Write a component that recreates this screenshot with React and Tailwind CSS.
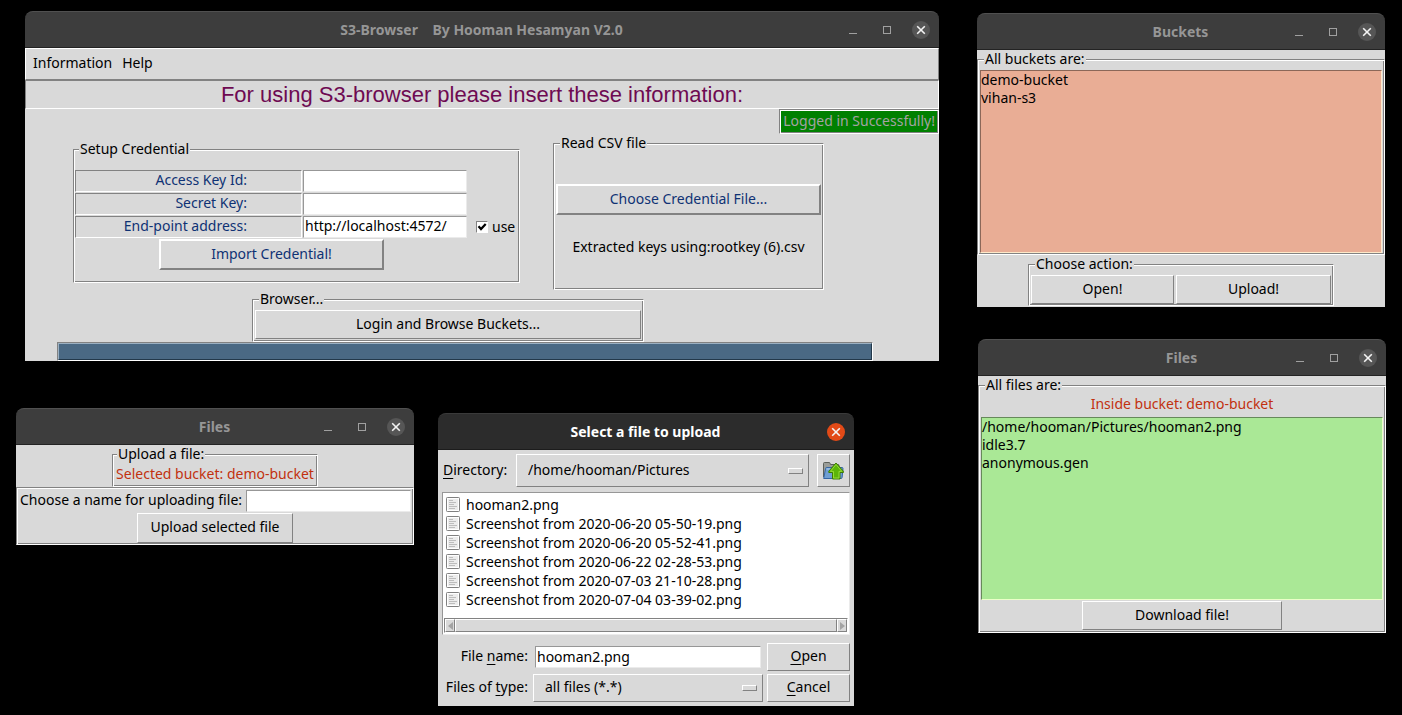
import React from "react";

const RAISED = "border border-t-white border-l-white border-b-[#828282] border-r-[#828282]";
const RAISED_2 = "border-2 border-t-white border-l-white border-b-[#828282] border-r-[#828282]";
const SUNKEN = "border border-t-[#828282] border-l-[#828282] border-b-white border-r-white";
const FIELD = "border border-t-[#979797] border-l-[#979797] border-b-[#ebebeb] border-r-[#ebebeb] bg-white";
const GROOVE = SUNKEN + " shadow-[inset_1px_1px_0_#ffffff,inset_-1px_-1px_0_#828282]";

function cx(...parts) {
  return parts.filter(Boolean).join(" ");
}

function CloseIcon() {
  return (
    <svg viewBox="0 0 10 10" className="size-[10px]" fill="none" stroke="#f4f4f4" strokeWidth="1.6">
      <path d="M1.2 1.2 L8.8 8.8 M8.8 1.2 L1.2 8.8" />
    </svg>
  );
}

function TitleBar({ title, active }) {
  return (
    <header
      className={cx(
        "grid h-[37px] grid-cols-[1fr_auto_1fr] items-center rounded-t-lg border-t border-b pr-px",
        active ? "border-t-[#3a3a3a] border-b-[#1c1c1c] bg-[#2c2c2c]" : "border-t-[#505050] border-b-[#232323] bg-[#3d3d3d]"
      )}
    >
      <h2 className={cx("col-start-2 whitespace-pre text-sm leading-5 font-bold", active ? "text-white" : "text-[#969696]")}>
        {title}
      </h2>
      <div className="flex justify-end">
        {!active && (
          <>
            <button aria-label="Minimize" className="flex h-6 w-[34px] items-end justify-center pb-2">
              <span className="h-px w-2 bg-[#a0a0a0]" />
            </button>
            <button aria-label="Maximize" className="flex h-6 w-[34px] items-center justify-center">
              <span className="size-2 border border-[#a0a0a0]" />
            </button>
          </>
        )}
        <button aria-label="Close" className="flex h-6 w-[34px] items-center justify-center">
          <span className={cx("flex size-[18px] items-center justify-center rounded-full", active ? "bg-[#e24a17]" : "bg-[#565656]")}>
            <CloseIcon />
          </span>
        </button>
      </div>
    </header>
  );
}

function Window({ title, active, place, children }) {
  return (
    <section className={cx("absolute", place)} aria-label={title}>
      <TitleBar title={title} active={active} />
      <div className="bg-[#d9d9d9]">{children}</div>
    </section>
  );
}

function Frame({ legend, className, children }) {
  return (
    <fieldset className={cx(GROOVE, "min-w-0", className)}>
      <legend className="ml-1 bg-[#d9d9d9] px-px leading-[18px]">{legend}</legend>
      {children}
    </fieldset>
  );
}

function Button({ heavy, className, children, ...rest }) {
  return (
    <button className={cx(heavy ? RAISED_2 : RAISED, "pb-[2px]", className)} {...rest}>
      {children}
    </button>
  );
}

function Credential({ id, label, value, extra }) {
  return (
    <div className="flex h-[22px] items-stretch gap-px">
      <label htmlFor={id} className={cx(SUNKEN, "w-[227px] pr-[54px] text-right leading-[18px] text-[#0f3274]")}>
        {label}
      </label>
      <input id={id} defaultValue={value} className={cx(FIELD, "w-[164px] px-px pb-[2px] outline-none")} />
      {extra}
    </div>
  );
}

function MainWindow() {
  return (
    <Window title="S3-Browser    By Hooman Hesamyan V2.0" place="left-[25px] top-[11px] w-[914px]">
      <nav className={cx(RAISED, "flex h-8 items-center gap-[10px] px-[7px] pb-[2px]")}>
        <button>Information</button>
        <button>Help</button>
      </nav>
      <h1 className={cx(SUNKEN, "h-[29px] text-center font-['Liberation_Sans',Arial,sans-serif] text-[22px] leading-7 text-[#6e0a52]")}>
        For using S3-browser please insert these information:
      </h1>
      <div className="flex justify-end">
        <output className={cx(GROOVE, "bg-[#008000] px-[3px] pb-px leading-[22px] text-[#a3a3a3]")}>Logged in Successfully!</output>
      </div>
      <div className="pr-[66px] pl-8">
        <div className="flex items-start gap-[33px] pl-4">
          <Frame legend="Setup Credential" className="mt-[6px] h-[143px] w-[447px] px-px">
            <div className="mt-3 flex flex-col gap-px">
              <Credential id="access" label="Access Key Id:" />
              <Credential id="secret" label="Secret Key:" />
              <Credential
                id="endpoint"
                label="End-point address:"
                value="http://localhost:4572/"
                extra={
                  <label className="ml-2 flex items-center gap-1 leading-[18px]">
                    <span className="relative flex">
                      <input
                        type="checkbox"
                        defaultChecked
                        className="peer size-3 appearance-none border border-t-[#828282] border-l-[#828282] border-b-white border-r-white bg-white"
                      />
                      <svg
                        viewBox="0 0 12 12"
                        className="pointer-events-none absolute inset-0 hidden size-3 peer-checked:block"
                        fill="none"
                        stroke="#000"
                        strokeWidth="2.2"
                      >
                        <path d="M2.5 5.2 L5 8 L9.7 3" />
                      </svg>
                    </span>
                    use
                  </label>
                }
              />
            </div>
            <Button heavy className="mt-px ml-[84px] block h-[31px] w-[225px] text-[#0f3274]">
              Import Credential!
            </Button>
          </Frame>
          <Frame legend="Read CSV file" className="h-[156px] w-[271px] px-[2px]">
            <Button heavy className="mt-8 block h-[31px] w-full text-[#0f3274]">
              Choose Credential File...
            </Button>
            <p className="mt-[23px] text-center leading-[18px]">Extracted keys using:rootkey (6).csv</p>
          </Frame>
        </div>
        <div className="flex justify-center pr-[34px]">
          <Frame legend="Browser..." className="w-[392px] px-[2px] pb-[2px]">
            <Button className="mt-[2px] block h-[29px] w-full">Login and Browse Buckets...</Button>
          </Frame>
        </div>
        <div role="progressbar" aria-valuenow={100} className={cx(SUNKEN, "h-[19px]")}>
          <div className="h-full border border-t-[#9bb0c2] border-l-[#9bb0c2] border-r-[#22384a] border-b-[#22384a] bg-[#4a6984]" />
        </div>
      </div>
    </Window>
  );
}

function ListBox({ label, items, tone }) {
  return (
    <ul role="listbox" aria-label={label} className={cx("h-[183px] border leading-[18px]", tone)}>
      {items.map((item) => (
        <li key={item} role="option" aria-selected="false">
          {item}
        </li>
      ))}
    </ul>
  );
}

function BucketsWindow() {
  return (
    <Window title="Buckets" place="left-[977px] top-[13px] w-[408px]">
      <Frame legend="All buckets are:" className="px-[2px] pt-[2px] pb-px">
        <ListBox
          label="Buckets"
          items={["demo-bucket", "vihan-s3"]}
          tone="border-t-[#8b6758] border-l-[#8b6758] border-b-[#ffe9c9] border-r-[#ffe9c9] bg-[#e9ad95]"
        />
      </Frame>
      <div className="flex justify-center pb-px">
        <Frame legend="Choose action:" className="w-[306px] px-[2px] pb-px">
          <div className="mt-[2px] flex gap-[2px]">
            <Button className="h-[29px] w-[143px]">Open!</Button>
            <Button className="h-[29px] grow">Upload!</Button>
          </div>
        </Frame>
      </div>
    </Window>
  );
}

function FilesWindow() {
  return (
    <Window title="Files" place="left-[978px] top-[339px] w-[408px]">
      <Frame legend="All files are:" className="px-[2px] pb-[2px]">
        <p className="mb-[3px] text-center leading-5 text-[#c2310f]">Inside bucket: demo-bucket</p>
        <ListBox
          label="Files"
          items={["/home/hooman/Pictures/hooman2.png", "idle3.7", "anonymous.gen"]}
          tone="border-t-[#66895a] border-l-[#66895a] border-b-[#ebffc8] border-r-[#ebffc8] bg-[#aae896]"
        />
        <Button className="mx-auto mt-px block h-[29px] w-[200px]">Download file!</Button>
      </Frame>
    </Window>
  );
}

function UploadWindow() {
  return (
    <Window title="Files" place="left-[16px] top-[408px] w-[398px]">
      <div className="flex justify-center">
        <Frame legend="Upload a file:" className="w-[206px] pb-[2px]">
          <p className="text-center leading-[21px] text-[#c2310f]">Selected bucket: demo-bucket</p>
        </Frame>
      </div>
      <div className={cx(GROOVE, "h-[58px] px-[2px] pt-[2px]")}>
        <div className="flex h-[22px] items-stretch justify-between">
          <label htmlFor="upload-name" className="px-px leading-5">
            Choose a name for uploading file:
          </label>
          <input id="upload-name" className={cx(FIELD, "w-[165px] px-px outline-none")} />
        </div>
        <Button className="mx-auto mt-px block h-[30px] w-[156px]">Upload selected file</Button>
      </div>
    </Window>
  );
}

function FileIcon() {
  return (
    <svg viewBox="0 0 14 15" className="h-[15px] w-[14px] shrink-0" fill="none">
      <rect x="0.5" y="0.5" width="13" height="14" rx="0.8" fill="#fff" stroke="#808080" />
      <rect x="2" y="2" width="10" height="11" fill="#ececec" />
      <path d="M3 3.5h4M3 5.5h7M3 7.5h5M3 9.5h8M3 11.5h6" stroke="#bdbdbd" />
    </svg>
  );
}

function ParentFolderIcon() {
  return (
    <svg viewBox="0 0 21 19" className="h-[19px] w-[21px]" fill="none">
      <path d="M0.5 16V2.500q0-1 1-1h4.500q1 0 1.200 1l.2 1h7.600q1 0 1 1v5" fill="#9a9d98" stroke="#5c605a" />
      <path d="M3.500 5.500h13v8h-13z" fill="#d5d7d3" stroke="#888a85" strokeWidth="0.6" />
      <path d="M0.700 17.500 2.600 7.500q.1-1 1-1h15.400q1 0 1 1l-.9 9q-.1 1-1 1z" fill="#6f9fd3" stroke="#3465a4" />
      <path d="M3.500 8h15" stroke="#b8d2ee" />
      <path d="M13 2 20.400 10.200v1.300h-3.400v6.500h-7.500v-6.500H5.800v-1.300z" fill="#5cb508" stroke="#3d7a04" strokeLinejoin="round" />
      <path d="M13 3.500 18.800 10.400h-2.800v6.600h-5.500v-6.600H7.400z" stroke="#9be03c" strokeWidth="0.9" />
    </svg>
  );
}

function DropDown({ id, value, size }) {
  return (
    <div className={cx("relative", size)}>
      <select id={id} className={cx(RAISED, "h-full w-full appearance-none bg-[#d9d9d9] px-[11px] pb-[2px] outline-none")}>
        <option>{value}</option>
      </select>
      <span className={cx(RAISED, "pointer-events-none absolute top-1/2 right-[6px] h-[6px] w-[15px] -translate-y-1/2")} />
    </div>
  );
}

function Key({ children }) {
  return <span className="underline decoration-1 underline-offset-3">{children}</span>;
}

const PICTURES = [
  "hooman2.png",
  "Screenshot from 2020-06-20 05-50-19.png",
  "Screenshot from 2020-06-20 05-52-41.png",
  "Screenshot from 2020-06-22 02-28-53.png",
  "Screenshot from 2020-07-03 21-10-28.png",
  "Screenshot from 2020-07-04 03-39-02.png",
];

function ScrollArrow({ left }) {
  return (
    <button aria-label={left ? "Scroll left" : "Scroll right"} className={cx(RAISED, "flex w-[10px] items-center justify-center bg-[#d9d9d9]")}>
      <svg viewBox="0 0 5 8" className="h-2 w-[5px]" fill="#a3a3a3">
        <path d={left ? "M5 0V8L0 4z" : "M0 0V8L5 4z"} />
      </svg>
    </button>
  );
}

function FileDialog() {
  return (
    <Window title="Select a file to upload" active place="left-[438px] top-[413px] w-[416px]">
      <div className="px-1 py-1">
        <div className="flex h-[33px] items-stretch">
          <label htmlFor="directory" className="w-[74px] pl-px leading-8">
            <Key>D</Key>irectory:
          </label>
          <DropDown id="directory" value="/home/hooman/Pictures" size="grow" />
          <button aria-label="Parent directory" className={cx(RAISED, "ml-2 flex w-[33px] items-center justify-center")}>
            <ParentFolderIcon />
          </button>
        </div>
        <div className={cx(FIELD, "mt-[5px] flex h-[143px] flex-col justify-between px-px pt-[2px] pb-px")}>
          <ul role="listbox" aria-label="Pictures" className="pl-[2px]">
            {PICTURES.map((name) => (
              <li key={name} role="option" aria-selected={name === "hooman2.png"} className="flex h-[19px] items-center gap-[6px] leading-[19px]">
                <FileIcon />
                {name}
              </li>
            ))}
          </ul>
          <div className={cx(SUNKEN, "flex h-[15px] items-stretch bg-[#c3c3c3]")}>
            <ScrollArrow left />
            <div className={cx(RAISED, "grow bg-[#d9d9d9]")} />
            <ScrollArrow />
          </div>
        </div>
        <div className="mt-2 grid grid-cols-[87px_1fr_83px] items-center gap-x-1 gap-y-[3px]">
          <label htmlFor="file-name" className="pr-px pb-[2px] text-right leading-5">
            File <Key>n</Key>ame:
          </label>
          <input id="file-name" defaultValue="hooman2.png" className={cx(FIELD, "mx-[2px] h-[22px] min-w-0 px-px pb-[2px] outline-none")} />
          <Button className="h-7">
            <Key>O</Key>pen
          </Button>
          <label htmlFor="file-type" className="pr-px pb-[2px] text-right leading-5">
            Files of <Key>t</Key>ype:
          </label>
          <DropDown id="file-type" value="all files (*.*)" size="h-7" />
          <Button className="h-7">
            <Key>C</Key>ancel
          </Button>
        </div>
      </div>
    </Window>
  );
}

export default function App() {
  return (
    <main className="relative min-h-screen overflow-hidden bg-black font-['Noto_Sans',sans-serif] text-[14px] leading-[18px] text-black">
      <MainWindow />
      <BucketsWindow />
      <FilesWindow />
      <UploadWindow />
      <FileDialog />
    </main>
  );
}
